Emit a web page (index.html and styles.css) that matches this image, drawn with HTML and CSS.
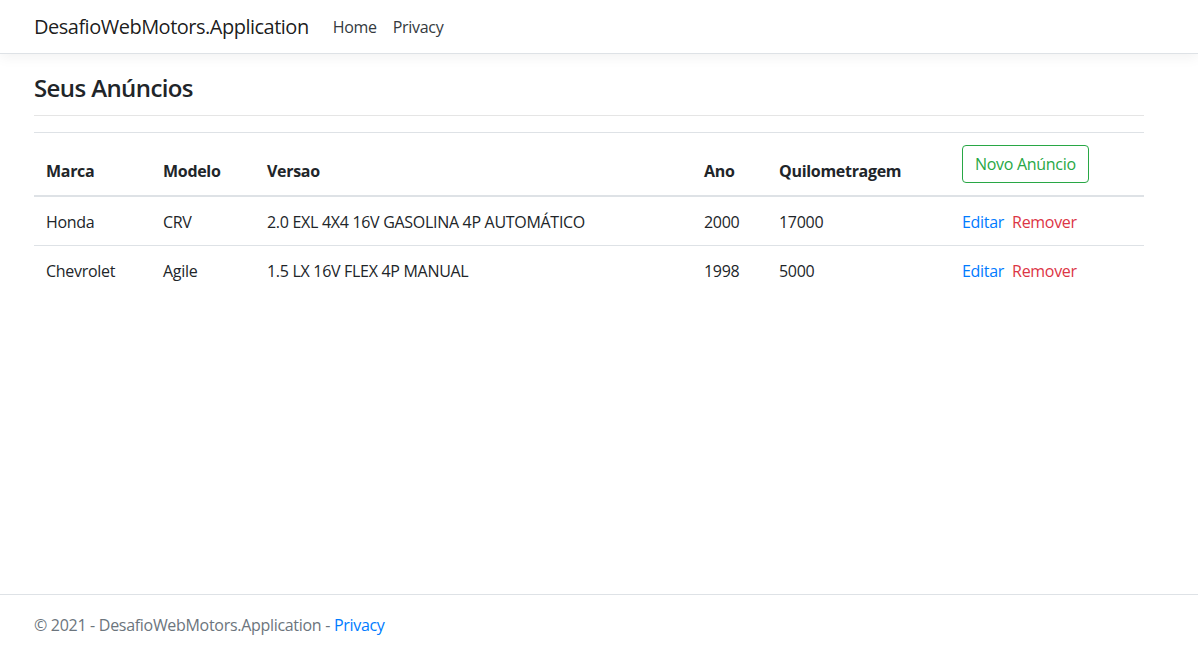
FILE: index.html
```html
<!DOCTYPE html>
<html lang="pt-br">
<head>
<meta charset="utf-8">
<title>Seus Anúncios - DesafioWebMotors.Application</title>
<link rel="stylesheet" href="styles.css">
</head>
<body>
<header class="navbar">
  <div class="nav-inner">
    <a class="brand" href="#">DesafioWebMotors.Application</a>
    <ul class="nav-links">
      <li><a class="nav-link" href="#">Home</a></li>
      <li><a class="nav-link" href="#">Privacy</a></li>
    </ul>
  </div>
</header>
<main class="content">
  <h3 class="title">Seus Anúncios</h3>
  <hr class="divider">
  <table class="grid">
    <colgroup>
      <col class="c-marca"><col class="c-modelo"><col class="c-versao"><col class="c-ano"><col class="c-km"><col class="c-acoes">
    </colgroup>
    <thead>
      <tr>
        <th>Marca</th>
        <th>Modelo</th>
        <th>Versao</th>
        <th>Ano</th>
        <th>Quilometragem</th>
        <th><a class="btn-outline" href="#">Novo Anúncio</a></th>
      </tr>
    </thead>
    <tbody>
      <tr>
        <td>Honda</td>
        <td>CRV</td>
        <td>2.0 EXL 4X4 16V GASOLINA 4P AUTOMÁTICO</td>
        <td>2000</td>
        <td>17000</td>
        <td><span class="actions"><a class="link-edit" href="#">Editar</a><a class="link-remove" href="#">Remover</a></span></td>
      </tr>
      <tr>
        <td>Chevrolet</td>
        <td>Agile</td>
        <td>1.5 LX 16V FLEX 4P MANUAL</td>
        <td>1998</td>
        <td>5000</td>
        <td><span class="actions"><a class="link-edit" href="#">Editar</a><a class="link-remove" href="#">Remover</a></span></td>
      </tr>
    </tbody>
  </table>
</main>
<footer class="footer">
  <div class="footer-inner">&copy; 2021 - DesafioWebMotors.Application - <a class="footer-link" href="#">Privacy</a></div>
</footer>
</body>
</html>
```
FILE: styles.css
```css
* { box-sizing: border-box; }
html, body { margin: 0; padding: 0; height: 100%; }
body {
  font-family: "Segoe UI", "Open Sans", "Noto Sans", sans-serif;
  font-size: 16px;
  line-height: 1.5;
  letter-spacing: -0.3px;
  color: #212529;
  background: #fff;
  position: relative;
  min-height: 653px;
}
a { text-decoration: none; }

.navbar {
  height: 54px;
  border-bottom: 1px solid #dee2e6;
  box-shadow: 0 4px 12px rgba(0,0,0,.05);
  background: #fff;
}
.nav-inner {
  height: 53px;
  padding-left: 34px;
  display: flex;
  align-items: center;
}
.brand {
  font-size: 20px;
  line-height: 30px;
  letter-spacing: -0.5px;
  color: rgba(0,0,0,.9);
  margin-right: 16px;
}
.nav-links {
  list-style: none;
  margin: 0;
  padding: 0;
  display: flex;
}
.nav-link {
  display: block;
  padding: 8px;
  color: #343a40;
  font-size: 16px;
  line-height: 24px;
}

.content {
  width: 1110px;
  margin: 17px 0 0 34px;
}
.title {
  margin: 0;
  font-size: 24px;
  font-weight: 600;
  letter-spacing: -0.6px;
  line-height: 33px;
}
.divider {
  margin: 11px 0 16px;
  border: 0;
  border-top: 1px solid rgba(0,0,0,.1);
  height: 0;
}

.grid {
  width: 1110px;
  border-collapse: collapse;
  table-layout: fixed;
}
.c-marca { width: 117px; }
.c-modelo { width: 104px; }
.c-versao { width: 437px; }
.c-ano { width: 75px; }
.c-km { width: 183px; }
.c-acoes { width: 194px; }
.grid th, .grid td {
  padding: 12px;
  text-align: left;
  border-top: 1px solid #dee2e6;
  line-height: 24px;
  white-space: nowrap;
}
.grid th {
  vertical-align: bottom;
  font-weight: 700;
  border-bottom: 2px solid #dee2e6;
}
.grid td { vertical-align: top; padding-top: 13px; padding-bottom: 11px; }

.btn-outline {
  display: inline-block;
  padding: 6px 12px;
  border: 1px solid #28a745;
  border-radius: 4px;
  color: #28a745;
  font-weight: 400;
  line-height: 24px;
}
.actions { display: inline-flex; gap: 8px; }
.link-edit { color: #007bff; }
.link-remove { color: #dc3545; }

.footer {
  position: absolute;
  left: 0;
  right: 0;
  bottom: 0;
  height: 59px;
  border-top: 1px solid #dee2e6;
  line-height: 60px;
  color: #6c757d;
  white-space: nowrap;
}
.footer-inner { padding-left: 34px; }
.footer-link { color: #007bff; }
```
